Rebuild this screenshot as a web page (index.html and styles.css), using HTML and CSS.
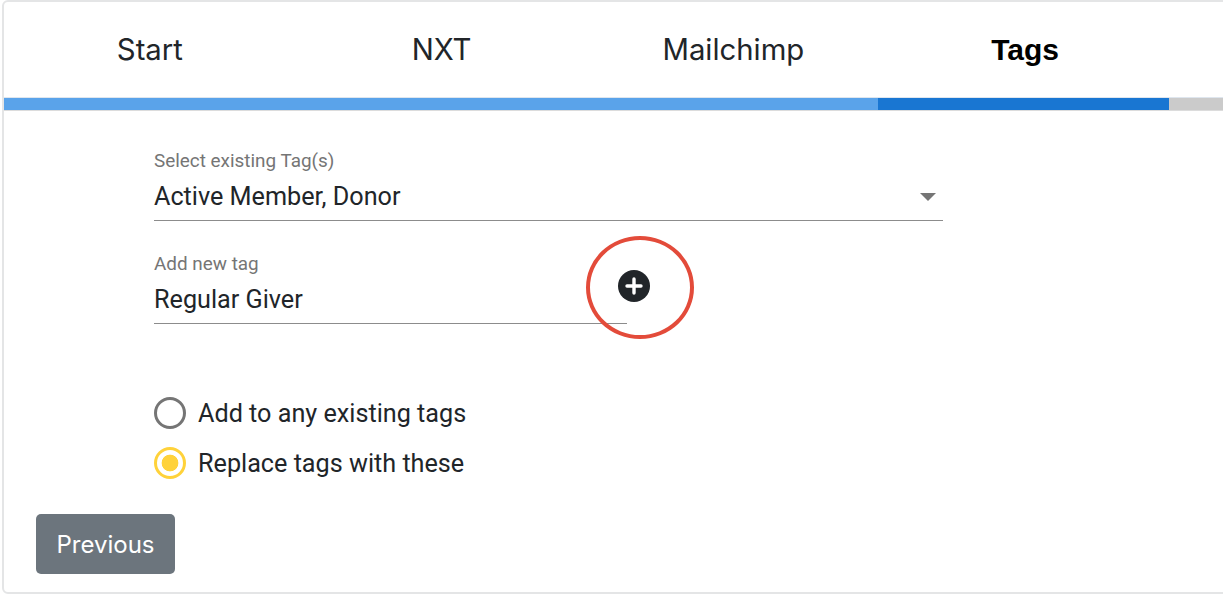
FILE: index.html
```html
<!DOCTYPE html>
<html lang="en">
<head>
<meta charset="utf-8">
<title>Tags</title>
<link rel="stylesheet" href="styles.css">
</head>
<body>
<main class="card">
  <nav class="tabs">
    <div class="tab">Start</div>
    <div class="tab">NXT</div>
    <div class="tab">Mailchimp</div>
    <div class="tab tab-active">Tags</div>
  </nav>
  <div class="progress">
    <div class="seg seg-done"></div>
    <div class="seg seg-current"></div>
  </div>
  <section class="form">
    <div class="field field-select">
      <label class="label">Select existing Tag(s)</label>
      <div class="value">Active Member, Donor<span class="caret"></span></div>
    </div>
    <div class="add-row">
      <div class="field field-add">
        <label class="label">Add new tag</label>
        <div class="value">Regular Giver</div>
      </div>
      <div class="add-btn">
        <svg width="32" height="32" viewBox="0 0 32 32"><circle cx="16" cy="16" r="16" fill="#212529"/><path d="M16 9v14M9 16h14" stroke="#fff" stroke-width="3.4" stroke-linecap="round"/></svg>
        <span class="ring"></span>
      </div>
    </div>
    <div class="radios">
      <div class="radio-row"><span class="radio"></span>Add to any existing tags</div>
      <div class="radio-row"><span class="radio radio-on"></span>Replace tags with these</div>
    </div>
  </section>
  <button class="prev">Previous</button>
</main>
</body>
</html>
```
FILE: styles.css
```css
* { box-sizing: border-box; }
html, body { margin: 0; height: 100%; overflow: hidden; background: #fff; }
body { font-family: Roboto, "Liberation Sans", sans-serif; color: #212529; }
.card {
  margin-left: 2px;
  width: 1240px;
  height: 594px;
  border: 2px solid #e4e5e6;
  border-radius: 6px;
  display: flex;
  flex-direction: column;
}
.tabs { display: flex; height: 95px; }
.tab {
  width: 291.75px;
  text-align: center;
  font-family: Inter, sans-serif;
  font-size: 29.3px;
  line-height: 96px;
}
.tab-active { font-family: "Liberation Sans", sans-serif; font-size: 30px; font-weight: 700; color: #000; }
.progress {
  display: flex;
  height: 14px;
  background: #cbcbcb;
  border-top: 1px solid #dfe6ee;
  border-bottom: 1px solid #dcdcdc;
}
.seg { height: 100%; }
.seg-done { width: 874px; background: #5aa3ea; }
.seg-current { width: 291px; background: #1976d2; }
.form { padding: 38px 0 0 150px; flex: 1; }
.label { display: block; font-size: 18.9px; line-height: 24px; color: #757575; }
.value {
  position: relative;
  font-size: 25.2px;
  line-height: 36px;
  height: 49px;
  padding-top: 7px;
  border-bottom: 1px solid #8c8c8c;
  margin-top: -1px;
}
.field-select { width: 789px; }
.caret {
  position: absolute;
  right: 7px;
  top: 21px;
  border-style: solid;
  border-width: 8px 8px 0;
  border-color: #757575 transparent transparent;
}
.add-row { display: flex; margin-top: 31px; }
.field-add { width: 473px; }
.add-btn { position: relative; margin: 18px 0 0 -9px; width: 32px; height: 32px; }
.add-btn svg { display: block; }
.ring {
  position: absolute;
  left: -32px;
  top: -34px;
  width: 108px;
  height: 103px;
  border: 4px solid #e34b3a;
  border-radius: 50%;
}
.radios { margin-top: 73px; }
.radio-row {
  display: flex;
  align-items: center;
  font-size: 25.2px;
  height: 32px;
  margin-bottom: 18px;
}
.radio {
  width: 32px;
  height: 32px;
  margin-right: 12px;
  border: 3px solid #757575;
  border-radius: 50%;
}
.radio-on {
  border-color: #ffd23a;
  background: radial-gradient(circle, #ffd23a 0 8px, #fff 8.7px);
}
.prev {
  align-self: flex-start;
  margin: 0 0 18px 32px;
  width: 139px;
  height: 60px;
  border: 0;
  border-radius: 5px;
  background: #6c757d;
  color: #fff;
  font: 400 24px Inter, sans-serif;
}
```
